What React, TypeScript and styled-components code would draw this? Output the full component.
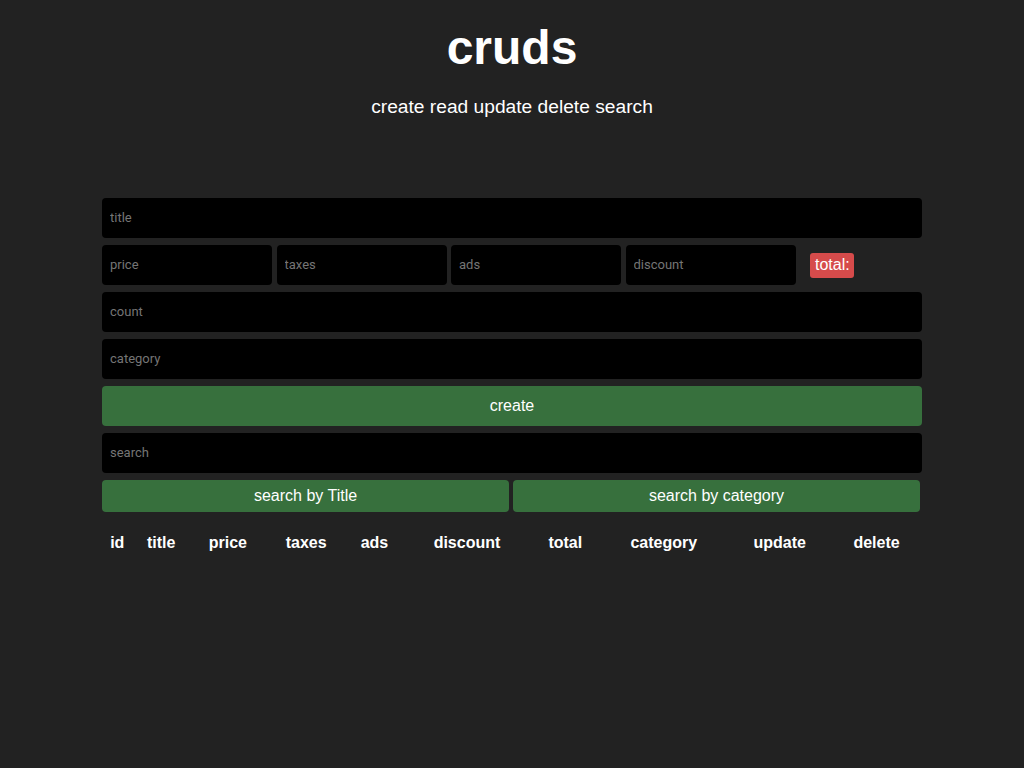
import React from "react";
import styled, { createGlobalStyle } from "styled-components";

const Global = createGlobalStyle`
  html, body { margin: 0; padding: 0; }
  body {
    background: #222222;
    color: #ffffff;
    font-family: "Liberation Sans", Arial, sans-serif;
    min-height: 768px;
  }
  * { box-sizing: border-box; }
`;

const Crud = styled.div`
  width: 820px;
  margin: 0 auto;
`;

const Head = styled.header`
  text-align: center;
`;

const Title = styled.h2`
  margin: 20px 0 0;
  font-size: 48px;
  line-height: 55px;
  font-weight: 700;
`;

const Subtitle = styled.p`
  margin: 21px 0 0;
  font-size: 19.2px;
  line-height: 22px;
`;

const Inputs = styled.div`
  margin-top: 80px;
  display: flex;
  flex-direction: column;
  gap: 7px;
`;

const Field = styled.input<{ $w?: string }>`
  width: ${(p) => p.$w ?? "100%"};
  height: 40px;
  border: none;
  outline: none;
  border-radius: 4px;
  background: #000000;
  color: #ffffff;
  padding: 0 8px 2px;
  font-family: Roboto, "Liberation Sans", sans-serif;
  font-size: 13px;
  flex-shrink: 0;
  &::placeholder { color: #757575; }
`;

const PriceRow = styled.div`
  display: flex;
  align-items: center;
  gap: 4.5px;
`;

const Total = styled.small`
  margin-left: 10px;
  background: #d64b4b;
  color: #ffffff;
  font-size: 16px;
  line-height: 18px;
  padding: 3px 4px 4px 5px;
  border-radius: 3px;
`;

const Button = styled.button<{ $h?: number }>`
  width: 100%;
  height: ${(p) => p.$h ?? 40}px;
  border: none;
  border-radius: 4px;
  background: #37703d;
  color: #ffffff;
  font-family: "Liberation Sans", Arial, sans-serif;
  font-size: 16px;
  cursor: pointer;
`;

const SearchButtons = styled.div`
  display: flex;
  gap: 4px;
  padding-right: 2px;
`;

const Table = styled.table`
  width: 100%;
  margin-top: 21px;
  text-align: center;
  border-collapse: collapse;
`;

const Th = styled.th`
  font-size: 16px;
  font-weight: 700;
  padding: 1px;
`;

const headers = ["id", "title", "price", "taxes", "ads", "discount", "total", "category", "update", "delete"];

export default function App() {
  return (
    <>
      <Global />
      <Crud>
        <Head>
          <Title>cruds</Title>
          <Subtitle>create read update delete search</Subtitle>
        </Head>
        <Inputs>
          <Field placeholder="title" />
          <PriceRow>
            <Field $w="170px" placeholder="price" />
            <Field $w="170px" placeholder="taxes" />
            <Field $w="170px" placeholder="ads" />
            <Field $w="170px" placeholder="discount" />
            <Total>total:</Total>
          </PriceRow>
          <Field placeholder="count" />
          <Field placeholder="category" />
          <Button>create</Button>
          <Field placeholder="search" />
          <SearchButtons>
            <Button $h={32}>search by Title</Button>
            <Button $h={32}>search by category</Button>
          </SearchButtons>
        </Inputs>
        <Table>
          <thead>
            <tr>
              {headers.map((h) => (
                <Th key={h}>{h}</Th>
              ))}
            </tr>
          </thead>
          <tbody />
        </Table>
      </Crud>
    </>
  );
}
